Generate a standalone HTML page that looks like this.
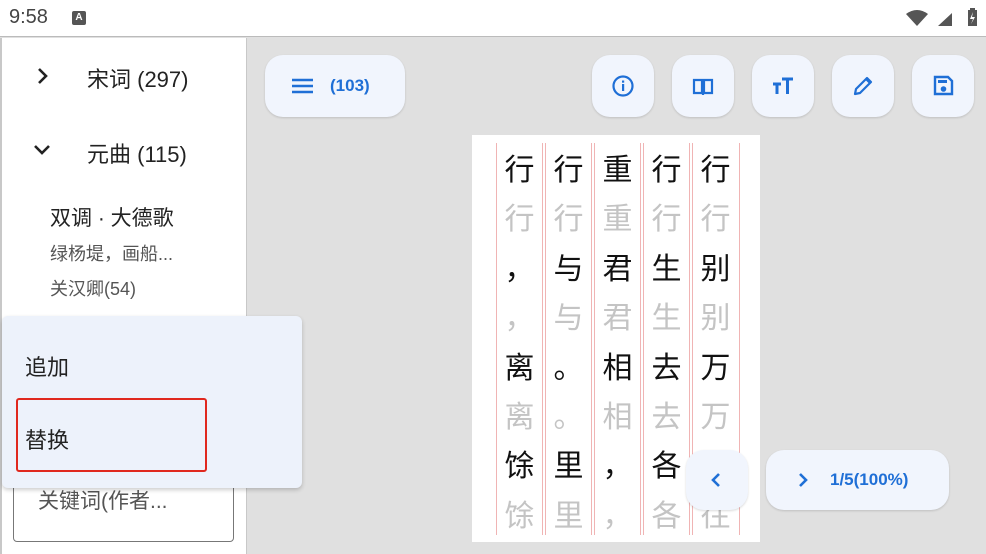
<!DOCTYPE html><html><head><meta charset="utf-8"><style>
*{margin:0;padding:0;box-sizing:border-box}
body{width:986px;height:554px;overflow:hidden;background:#e0e0e0;font-family:"Liberation Sans","Noto Sans CJK SC",sans-serif;position:relative}
.a{position:absolute}
.sb{left:0;top:0;width:986px;height:37px;background:#fff;border-bottom:1px solid #bbb}
.lp{left:0;top:38px;width:247px;height:516px;background:#fff;border-left:2px solid #c8c8c8;border-right:1px solid #c8c8c8}
.btn{background:#f1f5fd;border-radius:18px;box-shadow:0 1px 2px rgba(0,0,0,.15)}
.ib{top:55px;width:62px;height:62px}
.ib svg{position:absolute;left:19px;top:19px}
.pg{left:472px;top:135px;width:288px;height:407px;background:#fff}
.vl{top:143px;height:392px;width:1px;background:#f0b4b4}
.c{position:absolute;width:49px;text-align:center;font-size:30px;line-height:49px;font-family:"Noto Sans CJK SC",sans-serif}
.k{color:#111}.g{color:#c4c4c4}
</style></head><body>
<div class="a sb"></div>
<div class="a" style="left:9px;top:6px;font-size:20px;color:#444">9:58</div>
<div class="a" style="left:72px;top:11px;width:14px;height:14px;background:#555;border-radius:2px;color:#fff;font-size:10px;font-weight:bold;text-align:center;line-height:14px">A</div>
<svg class="a" style="left:905px;top:8px" width="72" height="20"><path d="M1 6 Q12 -2 23 6 L12 18Z" fill="#555"/><path d="M33 18 L47 5 L47 18Z" fill="#555"/><rect x="63" y="2" width="9" height="16" fill="#555"/><rect x="65" y="0" width="5" height="2" fill="#555"/><path d="M68 4 L65 11 L68 11 L66 16 L70 9 L67 9Z" fill="#fff"/></svg>
<div class="a lp"></div>
<svg class="a" style="left:36px;top:67px" width="14" height="18"><path d="M3 2 L10 9 L3 16" stroke="#222" stroke-width="2.6" fill="none"/></svg>
<div class="a" style="left:87px;top:62px;font-size:22px;color:#222">宋词 (297)</div>
<svg class="a" style="left:33px;top:143px" width="18" height="14"><path d="M2 3 L9 10 L16 3" stroke="#222" stroke-width="2.6" fill="none"/></svg>
<div class="a" style="left:87px;top:137px;font-size:22px;color:#222">元曲 (115)</div>
<div class="a" style="left:50px;top:202px;font-size:21px;color:#222">双调 · 大德歌</div>
<div class="a" style="left:50px;top:240px;font-size:18px;color:#555">绿杨堤，画船...</div>
<div class="a" style="left:50px;top:275px;font-size:18px;color:#555">关汉卿(54)</div>
<div class="a" style="left:13px;top:470px;width:221px;height:72px;border:1px solid #777;border-radius:4px"></div>
<div class="a" style="left:38px;top:485px;font-size:21px;color:#555">关键词(作者...</div>
<div class="a" style="left:2px;top:316px;width:300px;height:172px;background:#edf2fb;border-radius:6px;box-shadow:0 2px 4px rgba(0,0,0,.2)"></div>
<div class="a" style="left:25px;top:350px;font-size:22px;color:#222">追加</div>
<div class="a" style="left:16px;top:398px;width:191px;height:74px;border:2px solid #e0281e;border-radius:3px"></div>
<div class="a" style="left:25px;top:423px;font-size:22px;color:#222">替换</div>
<div class="a btn" style="left:265px;top:55px;width:140px;height:62px"></div>
<svg class="a" style="left:292px;top:78px" width="22" height="16"><path d="M0 2H21M0 8H21M0 14H21" stroke="#1f6fd6" stroke-width="2.4"/></svg>
<div class="a" style="left:330px;top:76px;font-size:17px;color:#1f6fd6;font-weight:bold">(103)</div>
<div class="a btn ib" style="left:592px"><svg width="24" height="24"><circle cx="12" cy="12" r="9.5" stroke="#1f6fd6" stroke-width="2.2" fill="none"/><rect x="11" y="10" width="2.2" height="7" fill="#1f6fd6"/><rect x="11" y="6.5" width="2.2" height="2.2" fill="#1f6fd6"/></svg></div>
<div class="a btn ib" style="left:672px"><svg width="24" height="24"><path d="M3 6H11V19H3ZM13 6H21V19H13Z" stroke="#1f6fd6" stroke-width="2.2" fill="none"/><path d="M12 19v2" stroke="#1f6fd6" stroke-width="2.2"/></svg></div>
<div class="a btn ib" style="left:752px"><svg width="24" height="24"><path d="M2 10H10M6 10V20M11 5H22M16.5 5V20" stroke="#1f6fd6" stroke-width="3"/></svg></div>
<div class="a btn ib" style="left:832px"><svg width="24" height="24"><path d="M4 20 L5 15 L16 4 L20 8 L9 19Z" stroke="#1f6fd6" stroke-width="2.2" fill="none" stroke-linejoin="round"/><path d="M15 5 L19 9" stroke="#1f6fd6" stroke-width="2.2"/></svg></div>
<div class="a btn ib" style="left:912px"><svg width="24" height="24"><path d="M4 3H17L21 7V20H4Z" stroke="#1f6fd6" stroke-width="2.4" fill="none"/><rect x="7" y="6" width="9" height="3" fill="#1f6fd6"/><circle cx="12.5" cy="15" r="2.8" fill="#1f6fd6"/></svg></div>
<div class="a pg"></div>
<div class="a vl" style="left:496px"></div>
<div class="a vl" style="left:542px"></div><div class="a vl" style="left:545px"></div>
<div class="a vl" style="left:591px"></div><div class="a vl" style="left:594px"></div>
<div class="a vl" style="left:640px"></div><div class="a vl" style="left:643px"></div>
<div class="a vl" style="left:689px"></div><div class="a vl" style="left:692px"></div>
<div class="a vl" style="left:739px"></div>
<div class="c k" style="left:495px;top:143px">行</div><div class="c g" style="left:495px;top:192px">行</div><div class="c k" style="left:495px;top:242px">，</div><div class="c g" style="left:495px;top:291px">，</div><div class="c k" style="left:495px;top:341px">离</div><div class="c g" style="left:495px;top:390px">离</div><div class="c k" style="left:495px;top:439px">馀</div><div class="c g" style="left:495px;top:489px">馀</div>
<div class="c k" style="left:544px;top:143px">行</div><div class="c g" style="left:544px;top:192px">行</div><div class="c k" style="left:544px;top:242px">与</div><div class="c g" style="left:544px;top:291px">与</div><div class="c k" style="left:544px;top:341px">。</div><div class="c g" style="left:544px;top:390px">。</div><div class="c k" style="left:544px;top:439px">里</div><div class="c g" style="left:544px;top:489px">里</div>
<div class="c k" style="left:593px;top:143px">重</div><div class="c g" style="left:593px;top:192px">重</div><div class="c k" style="left:593px;top:242px">君</div><div class="c g" style="left:593px;top:291px">君</div><div class="c k" style="left:593px;top:341px">相</div><div class="c g" style="left:593px;top:390px">相</div><div class="c k" style="left:593px;top:439px">，</div><div class="c g" style="left:593px;top:489px">，</div>
<div class="c k" style="left:642px;top:143px">行</div><div class="c g" style="left:642px;top:192px">行</div><div class="c k" style="left:642px;top:242px">生</div><div class="c g" style="left:642px;top:291px">生</div><div class="c k" style="left:642px;top:341px">去</div><div class="c g" style="left:642px;top:390px">去</div><div class="c k" style="left:642px;top:439px">各</div><div class="c g" style="left:642px;top:489px">各</div>
<div class="c k" style="left:691px;top:143px">行</div><div class="c g" style="left:691px;top:192px">行</div><div class="c k" style="left:691px;top:242px">别</div><div class="c g" style="left:691px;top:291px">别</div><div class="c k" style="left:691px;top:341px">万</div><div class="c g" style="left:691px;top:390px">万</div><div class="c k" style="left:691px;top:439px">往</div><div class="c g" style="left:691px;top:489px">往</div>
<div class="a btn" style="left:686px;top:450px;width:62px;height:60px"></div>
<svg class="a" style="left:710px;top:472px" width="12" height="16"><path d="M9 2 L3 8 L9 14" stroke="#1f6fd6" stroke-width="2.6" fill="none"/></svg>
<div class="a btn" style="left:766px;top:450px;width:183px;height:60px"></div>
<svg class="a" style="left:797px;top:472px" width="12" height="16"><path d="M3 2 L9 8 L3 14" stroke="#1f6fd6" stroke-width="2.6" fill="none"/></svg>
<div class="a" style="left:830px;top:470px;font-size:17px;color:#1f6fd6;font-weight:bold">1/5(100%)</div>
</body></html>
